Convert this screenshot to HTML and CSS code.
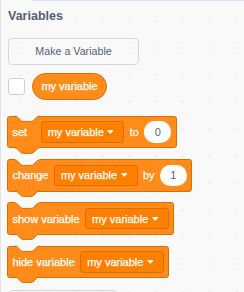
FILE: index.html
```html
<!DOCTYPE html>
<html lang="en">
<head>
    <meta charset="UTF-8">
    <meta name="viewport" content="width=device-width, initial-scale=1.0">
    <title>Variables</title>
    <link rel="stylesheet" href="styles.css">
</head>
<body>
    <div class="flyout">
        <div class="tab-edge"></div>
        <h2 class="cat-label">Variables</h2>

        <button class="fly-btn btn-var">Make a Variable</button>

        <div class="var-row">
            <span class="check"></span>
            <span class="reporter">my variable</span>
        </div>

        <!-- set -->
        <div class="block">
            <svg class="notch" viewBox="0 -1.5 36 10" width="24.3" height="6.75">
                <path class="notch-fill" d="M0,-1.5 V0 c2,0 3,1 4,2 l4,4 c1,1 2,2 4,2 h12 c2,0 3,-1 4,-2 l4,-4 c1,-1 2,-2 4,-2 V-1.5 Z"/>
                <path class="edge-line" d="M0,0 c2,0 3,1 4,2 l4,4 c1,1 2,2 4,2 h12 c2,0 3,-1 4,-2 l4,-4 c1,-1 2,-2 4,-2"/>
            </svg>
            <span class="lbl lbl-set">set</span>
            <span class="dd">my variable
                <svg class="caret" viewBox="0 0 13 8" width="6.5" height="4"><path d="M1,1 H12 L6.5,7 Z"/></svg>
            </span>
            <span class="lbl">to</span>
            <span class="num">0</span>
            <svg class="tab" viewBox="0 -1.5 36 10" width="24.3" height="6.75">
                <path class="tab-fill" d="M0,-1.5 V0 c2,0 3,1 4,2 l4,4 c1,1 2,2 4,2 h12 c2,0 3,-1 4,-2 l4,-4 c1,-1 2,-2 4,-2 V-1.5 Z"/>
                <path class="edge-line" d="M0,0 c2,0 3,1 4,2 l4,4 c1,1 2,2 4,2 h12 c2,0 3,-1 4,-2 l4,-4 c1,-1 2,-2 4,-2"/>
            </svg>
        </div>

        <!-- change -->
        <div class="block">
            <svg class="notch" viewBox="0 -1.5 36 10" width="24.3" height="6.75">
                <path class="notch-fill" d="M0,-1.5 V0 c2,0 3,1 4,2 l4,4 c1,1 2,2 4,2 h12 c2,0 3,-1 4,-2 l4,-4 c1,-1 2,-2 4,-2 V-1.5 Z"/>
                <path class="edge-line" d="M0,0 c2,0 3,1 4,2 l4,4 c1,1 2,2 4,2 h12 c2,0 3,-1 4,-2 l4,-4 c1,-1 2,-2 4,-2"/>
            </svg>
            <span class="lbl">change</span>
            <span class="dd">my variable
                <svg class="caret" viewBox="0 0 13 8" width="6.5" height="4"><path d="M1,1 H12 L6.5,7 Z"/></svg>
            </span>
            <span class="lbl">by</span>
            <span class="num">1</span>
            <svg class="tab" viewBox="0 -1.5 36 10" width="24.3" height="6.75">
                <path class="tab-fill" d="M0,-1.5 V0 c2,0 3,1 4,2 l4,4 c1,1 2,2 4,2 h12 c2,0 3,-1 4,-2 l4,-4 c1,-1 2,-2 4,-2 V-1.5 Z"/>
                <path class="edge-line" d="M0,0 c2,0 3,1 4,2 l4,4 c1,1 2,2 4,2 h12 c2,0 3,-1 4,-2 l4,-4 c1,-1 2,-2 4,-2"/>
            </svg>
        </div>

        <!-- show variable -->
        <div class="block">
            <svg class="notch" viewBox="0 -1.5 36 10" width="24.3" height="6.75">
                <path class="notch-fill" d="M0,-1.5 V0 c2,0 3,1 4,2 l4,4 c1,1 2,2 4,2 h12 c2,0 3,-1 4,-2 l4,-4 c1,-1 2,-2 4,-2 V-1.5 Z"/>
                <path class="edge-line" d="M0,0 c2,0 3,1 4,2 l4,4 c1,1 2,2 4,2 h12 c2,0 3,-1 4,-2 l4,-4 c1,-1 2,-2 4,-2"/>
            </svg>
            <span class="lbl">show variable</span>
            <span class="dd">my variable
                <svg class="caret" viewBox="0 0 13 8" width="6.5" height="4"><path d="M1,1 H12 L6.5,7 Z"/></svg>
            </span>
            <svg class="tab" viewBox="0 -1.5 36 10" width="24.3" height="6.75">
                <path class="tab-fill" d="M0,-1.5 V0 c2,0 3,1 4,2 l4,4 c1,1 2,2 4,2 h12 c2,0 3,-1 4,-2 l4,-4 c1,-1 2,-2 4,-2 V-1.5 Z"/>
                <path class="edge-line" d="M0,0 c2,0 3,1 4,2 l4,4 c1,1 2,2 4,2 h12 c2,0 3,-1 4,-2 l4,-4 c1,-1 2,-2 4,-2"/>
            </svg>
        </div>

        <!-- hide variable -->
        <div class="block">
            <svg class="notch" viewBox="0 -1.5 36 10" width="24.3" height="6.75">
                <path class="notch-fill" d="M0,-1.5 V0 c2,0 3,1 4,2 l4,4 c1,1 2,2 4,2 h12 c2,0 3,-1 4,-2 l4,-4 c1,-1 2,-2 4,-2 V-1.5 Z"/>
                <path class="edge-line" d="M0,0 c2,0 3,1 4,2 l4,4 c1,1 2,2 4,2 h12 c2,0 3,-1 4,-2 l4,-4 c1,-1 2,-2 4,-2"/>
            </svg>
            <span class="lbl">hide variable</span>
            <span class="dd">my variable
                <svg class="caret" viewBox="0 0 13 8" width="6.5" height="4"><path d="M1,1 H12 L6.5,7 Z"/></svg>
            </span>
            <svg class="tab" viewBox="0 -1.5 36 10" width="24.3" height="6.75">
                <path class="tab-fill" d="M0,-1.5 V0 c2,0 3,1 4,2 l4,4 c1,1 2,2 4,2 h12 c2,0 3,-1 4,-2 l4,-4 c1,-1 2,-2 4,-2 V-1.5 Z"/>
                <path class="edge-line" d="M0,0 c2,0 3,1 4,2 l4,4 c1,1 2,2 4,2 h12 c2,0 3,-1 4,-2 l4,-4 c1,-1 2,-2 4,-2"/>
            </svg>
        </div>

        <div class="fly-btn btn-list"></div>
    </div>
</body>
</html>
```

FILE: styles.css
```css
* {
    box-sizing: border-box;
    margin: 0;
    padding: 0;
}

html, body {
    overflow: hidden;
}

body {
    width: 244px;
    height: 292px;
    font-family: 'Liberation Sans', Arial, sans-serif;
    background: #f9f9f9;
}

.flyout {
    height: 100%;
    border-left: 1px solid #e4e4e4;
    background-image: radial-gradient(circle, #e2e2e2 0.7px, transparent 1.2px);
    background-size: 27px 27px;
    background-position: 6.5px 7.5px;
}

.tab-edge {
    height: 1px;
    margin-left: 32px;
    background: #d9e3f2;
}

.cat-label {
    margin: 8.4px 0 0 7px;
    font-size: 12.5px;
    line-height: 15px;
    font-weight: bold;
    color: #575e75;
}

.fly-btn {
    display: block;
    height: 27px;
    margin-left: 7px;
    border: 1px solid #d6d6d6;
    border-radius: 4px;
    background: transparent;
    font-family: 'Liberation Sans', Arial, sans-serif;
    font-size: 10.7px;
    color: #575e75;
}

.btn-var {
    width: 131px;
    margin-top: 13.6px;
}

/* "Make a List" button, only its top edge is in view */
.btn-list {
    width: 109px;
    margin-top: 12px;
}

.var-row {
    display: flex;
    align-items: center;
    gap: 7px;
    height: 27px;
    margin-top: 8px;
    padding-left: 7px;
}

.check {
    width: 17px;
    height: 17px;
    border: 1px solid #cfcfcf;
    border-radius: 3px;
    background: white;
}

.reporter {
    height: 27px;
    padding: 0 8.4px;
    display: flex;
    align-items: center;
    border: 1px solid #db6e00;
    border-radius: 13.5px;
    background: #ff8c1a;
    color: white;
    font-size: 11px;
    -webkit-text-stroke: 0.25px white;
}

/* stack blocks */
.block {
    position: relative;
    display: flex;
    align-items: center;
    gap: 5.4px;
    width: fit-content;
    height: 32.4px;
    margin: 16px 0 0 6px;
    padding: 0 4.4px;
    border: 1px solid #db6e00;
    border-radius: 2.7px;
    background: #ff8c1a;
    color: white;
    font-size: 11px;
    -webkit-text-stroke: 0.25px white;
}

.block + .block {
    margin-top: 10.8px;
}

.notch,
.tab {
    position: absolute;
    left: 7.1px;
    overflow: visible;
}

.notch {
    top: -1.5px;
}

.tab {
    top: calc(100% - 0.5px);
}

.notch-fill {
    fill: #f9f9f9;
}

.tab-fill {
    fill: #ff8c1a;
}

.edge-line {
    fill: none;
    stroke: #db6e00;
    stroke-width: 1.48;
}

.lbl {
    white-space: nowrap;
}

.lbl-set {
    min-width: 22.9px;
}

.dd {
    display: flex;
    align-items: center;
    gap: 3.5px;
    height: 21.6px;
    padding: 0 9.4px 0 6px;
    border: 1px solid #db6e00;
    border-radius: 2.7px;
    background: #ff8000;
    white-space: nowrap;
}

.caret path {
    fill: white;
    stroke: white;
    stroke-width: 1.5;
    stroke-linejoin: round;
}

.num {
    width: 27px;
    height: 21.6px;
    display: flex;
    align-items: center;
    justify-content: center;
    border-radius: 10.8px;
    background: white;
    color: #575e75;
    -webkit-text-stroke: 0;
}
```
